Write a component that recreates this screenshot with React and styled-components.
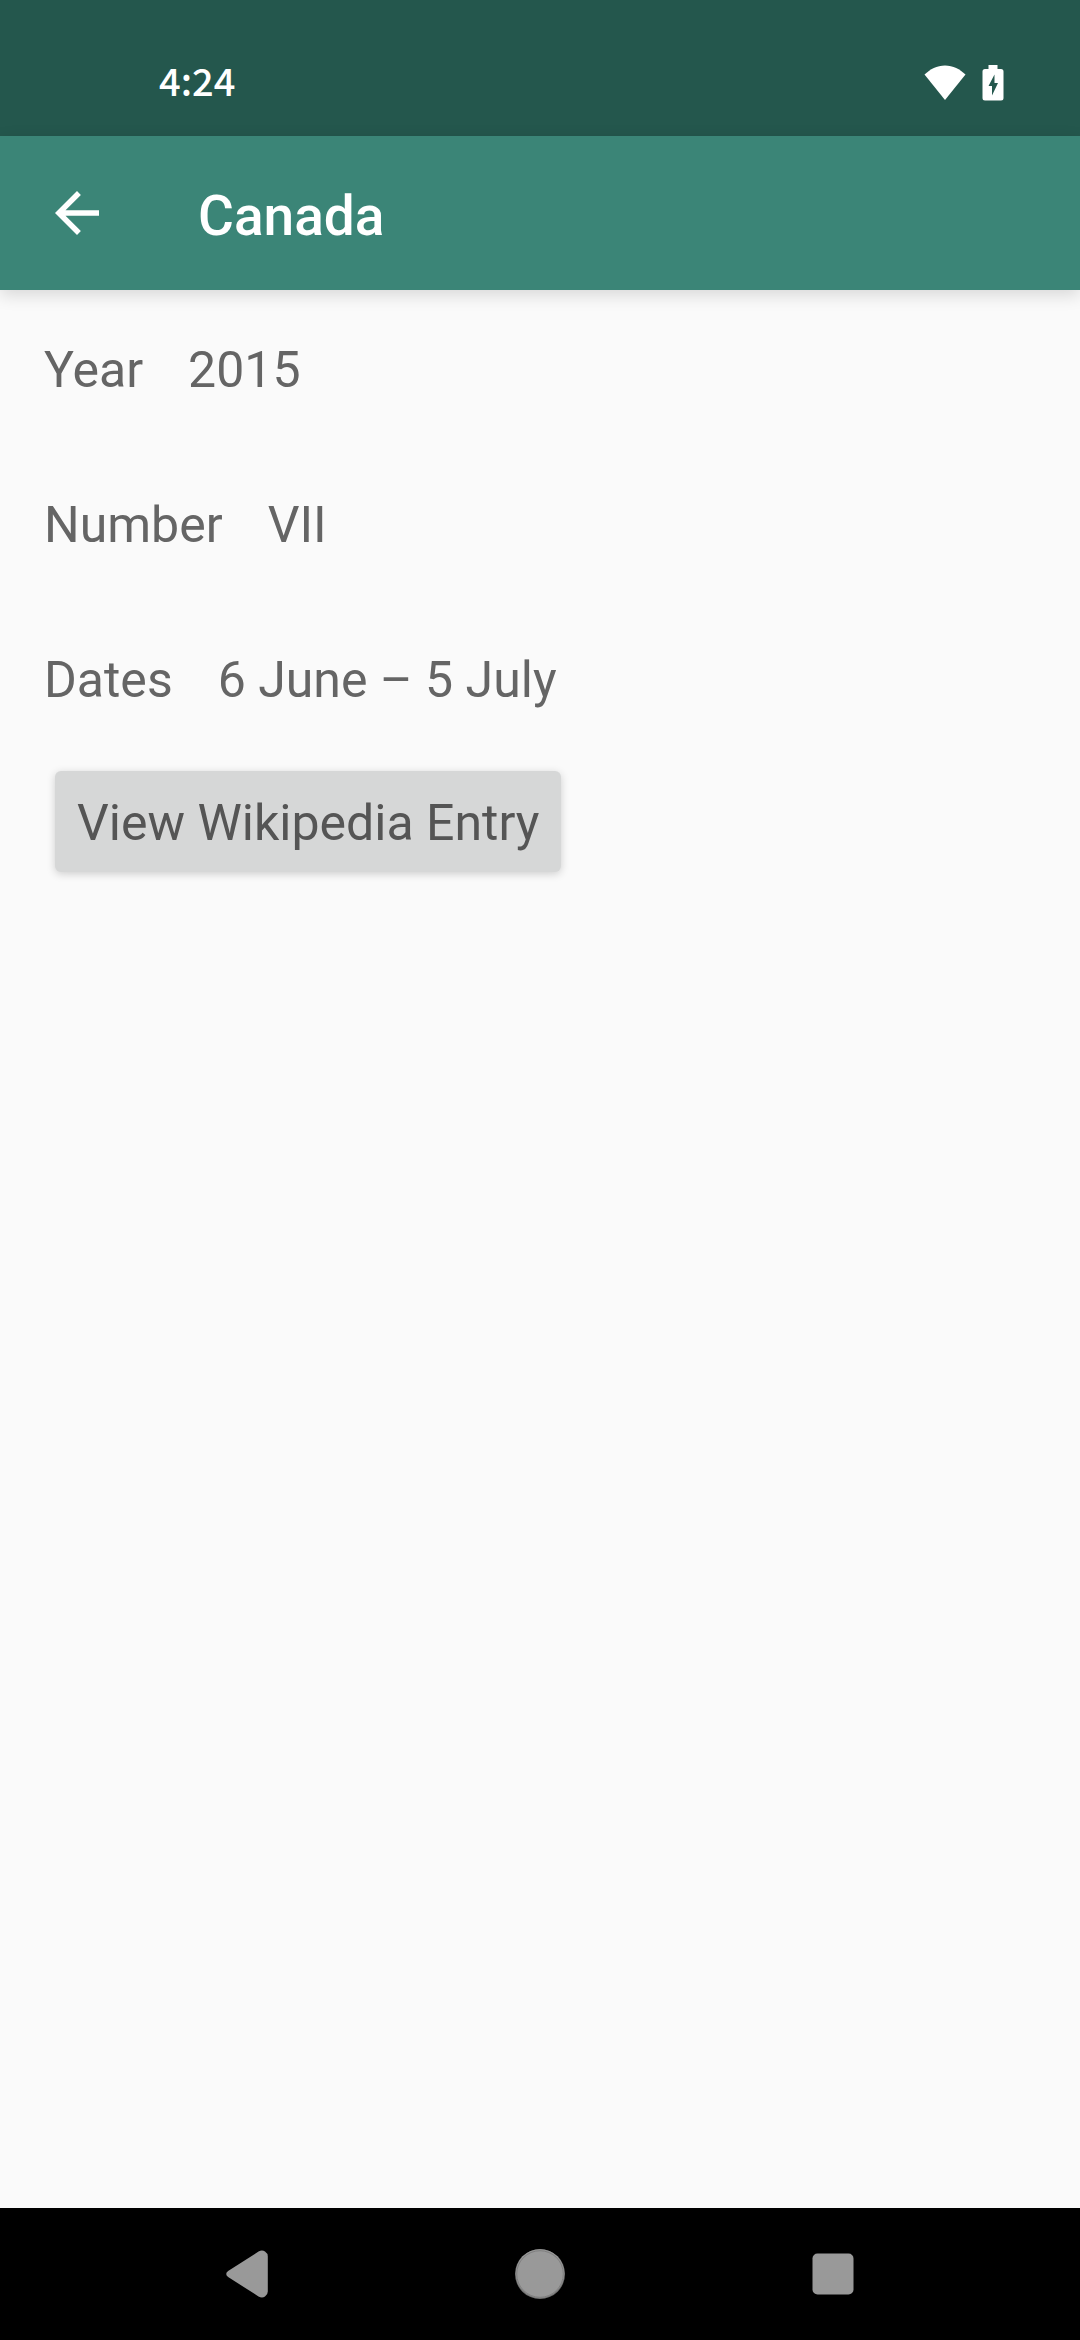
import React from "react";
import styled, { createGlobalStyle } from "styled-components";

const GlobalStyle = createGlobalStyle`
  *, *::before, *::after { box-sizing: border-box; }
  body {
    margin: 0;
    background: #fafafa;
    font-family: Roboto, "Liberation Sans", sans-serif;
  }
`;

const Screen = styled.div`
  display: flex;
  flex-direction: column;
  min-height: 100vh;
`;

const StatusBar = styled.div`
  display: flex;
  align-items: center;
  justify-content: space-between;
  height: 136px;
  padding: 30px 76px 0 159px;
  background: #24574d;
  color: #fff;
`;

const Clock = styled.time`
  padding-bottom: 6px;
  font: 500 38px/52px "Noto Sans CJK JP", "Open Sans", sans-serif;
`;

const StatusIcons = styled.div`
  display: flex;
  align-items: center;
  gap: 16px;
`;

const AppBar = styled.header`
  display: flex;
  align-items: center;
  gap: 44px;
  height: 154px;
  padding: 0 44px;
  background: #3b8577;
  color: #fff;
  box-shadow: 0 5px 16px rgba(0, 0, 0, 0.14);
`;

const IconButton = styled.button`
  display: flex;
  align-items: center;
  justify-content: center;
  width: ${(p) => p.$width};
  height: 110px;
  padding: 0;
  border: 0;
  background: none;
  color: inherit;
`;

const Title = styled.h1`
  margin: 0;
  padding: 6px 0 0 44px;
  font-size: 55px;
  font-weight: 500;
  line-height: 64px;
`;

const Content = styled.main`
  flex: 1;
`;

const Details = styled.dl`
  margin: 0;
`;

const DetailRow = styled.div`
  display: flex;
  gap: 45px;
  padding: 47px 44px 41px;
  color: #656565;
  font-size: 50px;
  line-height: 67px;
`;

const Label = styled.dt`
  margin: 0;
`;

const Value = styled.dd`
  margin: 0;
`;

const EntryButton = styled.button`
  margin: 16px 55px;
  padding: 19px 22px 15px;
  border: 0;
  border-radius: 6px;
  background: #d6d7d7;
  color: #555;
  font: 400 50px/67px Roboto, "Liberation Sans", sans-serif;
  box-shadow: 0 2px 8px rgba(0, 0, 0, 0.18);
`;

const NavBar = styled.nav`
  display: flex;
  align-items: center;
  height: 132px;
  padding: 0 101px;
  background: #000;
  color: #999;
`;

const details = [
  { label: "Year", value: "2015" },
  { label: "Number", value: "VII" },
  { label: "Dates", value: "6 June – 5 July" },
];

function WifiIcon() {
  return (
    <svg width="42" height="36" viewBox="0 0 42 36" fill="currentColor" aria-hidden="true">
      <path d="M0.5 9.6C6 4 13 .4 21 .4S36 4 41.500 9.600L21 35z" />
    </svg>
  );
}

function BatteryIcon() {
  return (
    <svg width="22" height="36" viewBox="0 0 22 36" fill="currentColor" aria-hidden="true">
      <path
        fillRule="evenodd"
        d="M6.500 0h9v4H19q2.500 0 2.500 2.500V33q0 2.500-2.500 2.500H3Q.5 35.500.5 33V6.500Q.5 4 3 4h3.500zM12.500 9.500L6.500 21h3.500v9.500L16 18h-3.500z"
      />
    </svg>
  );
}

function ArrowIcon() {
  return (
    <svg width="66" height="66" viewBox="0 0 24 24" fill="currentColor" aria-hidden="true">
      <path d="M20 11H7.830l5.590-5.590L12 4l-8 8 8 8 1.410-1.410L7.830 13H20z" />
    </svg>
  );
}

function BackIcon() {
  return (
    <svg width="42" height="48" viewBox="0 0 42 48" fill="currentColor" aria-hidden="true">
      <path d="M2.500 20.700L32.500 1.600Q36 -.3 39 1.500Q41.800 3.200 41.800 6.500V41.500Q41.800 44.800 39 46.500Q36 48.300 32.500 46.400L2.500 27.300Q.2 26 .2 24T2.500 20.700z" />
    </svg>
  );
}

function HomeIcon() {
  return (
    <svg width="50" height="50" viewBox="0 0 50 50" aria-hidden="true">
      <circle cx="25" cy="25" r="25" fill="#6f6f6f" />
      <circle cx="25" cy="24.500" r="24.300" fill="#999" />
      <circle cx="25" cy="25" r="23.300" fill="none" stroke="#777" strokeWidth="0.8" />
    </svg>
  );
}

function RecentsIcon() {
  return (
    <svg width="42" height="42" viewBox="0 0 42 42" fill="currentColor" aria-hidden="true">
      <rect x="0.500" y="0.500" width="41" height="41" rx="5" />
    </svg>
  );
}

export default function App() {
  return (
    <Screen>
      <GlobalStyle />
      <StatusBar>
        <Clock>4:24</Clock>
        <StatusIcons>
          <WifiIcon />
          <BatteryIcon />
        </StatusIcons>
      </StatusBar>
      <AppBar>
        <IconButton $width="66px" aria-label="Navigate up">
          <ArrowIcon />
        </IconButton>
        <Title>Canada</Title>
      </AppBar>
      <Content>
        <Details>
          {details.map(({ label, value }) => (
            <DetailRow key={label}>
              <Label>{label}</Label>
              <Value>{value}</Value>
            </DetailRow>
          ))}
        </Details>
        <EntryButton>View Wikipedia Entry</EntryButton>
      </Content>
      <NavBar aria-label="System navigation">
        <IconButton $width="100%" aria-label="Back">
          <BackIcon />
        </IconButton>
        <IconButton $width="100%" aria-label="Home">
          <HomeIcon />
        </IconButton>
        <IconButton $width="100%" aria-label="Recent apps">
          <RecentsIcon />
        </IconButton>
      </NavBar>
    </Screen>
  );
}
